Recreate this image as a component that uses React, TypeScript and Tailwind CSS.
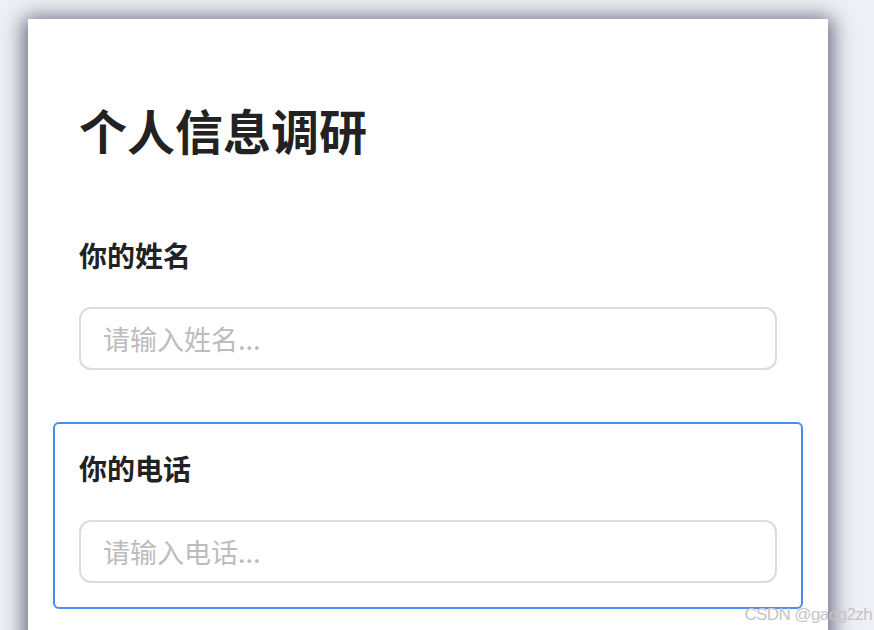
import React from "react";

const font = { fontFamily: '"Noto Sans CJK SC", "Noto Sans", sans-serif' };

function Field({ label, placeholder, active }: { label: string; placeholder: string; active?: boolean }) {
  return (
    <div
      className={`rounded-[6px] border-2 px-[24px] pt-[24px] pb-[24px] ${
        active ? "border-[#4a8cf2]" : "border-transparent"
      }`}
    >
      <div className="text-[28px] leading-[41px] font-bold text-[#222]">{label}</div>
      <input
        className="mt-[31px] block w-full h-[63px] rounded-[12px] border-2 border-[#dcdcdc] px-[22px] text-[27px] text-[#333] placeholder:text-[#bcbcbc] outline-none"
        placeholder={placeholder}
        style={font}
      />
    </div>
  );
}

export default function App() {
  return (
    <div className="relative w-[874px] h-[630px] overflow-hidden bg-[#eff0f5]" style={font}>
      <div className="ml-[28px] mt-[19px] w-[800px] h-[700px] bg-white shadow-[0_3px_20px_4px_rgba(50,50,80,0.75)] px-[25px] pt-[80px]">
        <h1 className="pl-[26px] text-[48px] leading-[60px] font-bold text-[#222]">个人信息调研</h1>
        <div className="mt-[50px] flex flex-col gap-[26px]">
          <Field label="你的姓名" placeholder="请输入姓名..." />
          <Field label="你的电话" placeholder="请输入电话..." active />
        </div>
      </div>
      <div
        className="absolute right-[2px] top-[605px] text-[17px] leading-[20px] text-[#c4c4c4] tracking-[-0.6px]"
        style={{ fontFamily: '"Liberation Sans", Arial, sans-serif' }}
      >
        CSDN @gaog2zh
      </div>
    </div>
  );
}
